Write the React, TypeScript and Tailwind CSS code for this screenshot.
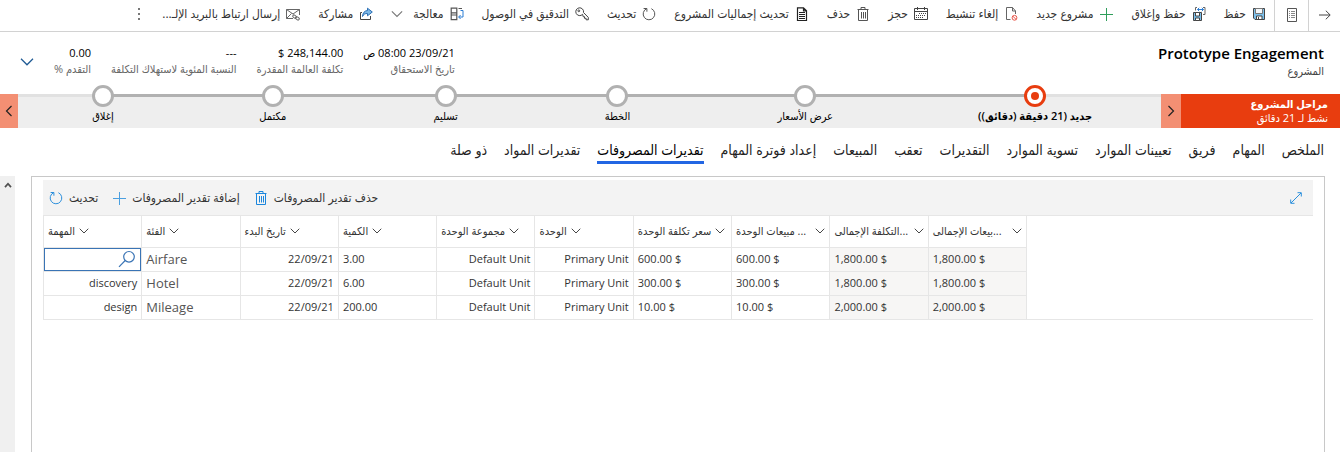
import type { ReactNode } from "react";

type IconProps = { children: ReactNode; className?: string };

function Icon({ children, className = "text-[#555]" }: IconProps) {
  return (
    <svg
      viewBox="0 0 14 14"
      fill="none"
      stroke="currentColor"
      strokeWidth="1"
      aria-hidden="true"
      className={"h-3.5 w-3.5 shrink-0 " + className}
    >
      {children}
    </svg>
  );
}

function Chevron({ className = "text-[#444]" }: { className?: string }) {
  return (
    <svg viewBox="0 0 11 7" fill="none" stroke="currentColor" aria-hidden="true" className={"shrink-0 " + className}>
      <path d="M.8 1 5.5 5.7 10.2 1" strokeWidth="1" />
    </svg>
  );
}

const SaveIcon = () => (
  <Icon className="text-[#444]">
    <path d="M1.500 1.500h11v11h-9.500l-1.500-1.500z" fill="#7cc0ec" />
    <path d="M3.500 1.500h7v5h-7z" fill="#f4f8fb" stroke="#777" />
    <path d="M4.500 9h5.500v3.500H4.500z" fill="#fff" />
    <path d="M6.500 10v2.500" />
  </Icon>
);

const SaveCloseIcon = () => (
  <Icon className="text-[#444]">
    <path d="M1.500 5.500h8v8h-8z" fill="#7cc0ec" />
    <path d="M3.500 5.500h4V9h-4z" fill="#fff" />
    <path d="M3.500 11h4v2.500h-4z" fill="#fff" />
    <path d="M5 .5H3.500v3M11 .5h2v7h-2" stroke="#666" />
    <path d="M5.500 2.500h6M7.200.800 5.500 2.500l1.700 1.700M9.800.800l1.700 1.700-1.700 1.700" stroke="#2b7cd3" />
  </Icon>
);

const PlusIcon = ({ className }: { className?: string }) => (
  <Icon className={className}>
    <path d="M7.500 1v13M1 7.500h13" />
  </Icon>
);

const DeactivateIcon = () => (
  <Icon className="text-[#666]">
    <path d="M6.500 12.500h-4V.500h6l3 3.500v3M8.500.500V4h3" />
    <circle cx="10.500" cy="10.800" r="2.400" stroke="#e8564a" />
    <path d="m8.800 9.200 3.400 3.300" stroke="#e8564a" />
  </Icon>
);

const CalendarIcon = () => (
  <Icon className="text-[#444]">
    <path d="M.5 1.500h13v11H.5zM.5 4.500h13M3.500 0v3M10.500 0v3" />
    <path d="M5 6.500h7M2 8.500h10M2 10.500h7" strokeDasharray="1 1" />
  </Icon>
);

const TrashIcon = ({ className }: { className?: string }) => (
  <Icon className={className}>
    <path d="M1.500 2.500h11M5 2.300V.500h4v1.800M2.500 2.500v11h9v-11M5.500 5v6.500M7.500 5v6.500M9.500 5v6.500" />
  </Icon>
);

const DocumentIcon = () => (
  <Icon className="text-[#222]">
    <path d="M2.500 .800h6l3 3v9.700h-9zM8.500.800v3h3" strokeWidth="1.200" />
    <path d="M4 5.500h6M4 7.500h6M4 9.500h6M4 11.500h6" />
  </Icon>
);

const RefreshIcon = ({ className }: { className?: string }) => (
  <Icon className={className}>
    <path d="M4.800 1.600A5.800 5.800 0 1 0 9.400 1.700" />
    <path d="M1.600 1.500h3.300v3.200" />
  </Icon>
);

const KeyIcon = () => (
  <Icon className="text-[#444]">
    <path d="M7.600 7.300A3.900 3.900 0 1 1 8.500 5.500l4.800 4.900v2.400h-2.200v-1.500H9.500V9.700H8.200z" />
    <circle cx="3.800" cy="3.800" r=".900" />
  </Icon>
);

const ProcessIcon = () => (
  <Icon className="text-[#555]">
    <path d="M1.200 1.200h5.600v4.600H1.200zM1.200 8h5.600v4.600H1.200zM1.200 5.800V8M6.800 5.800V8" strokeWidth="1.200" />
    <path d="M8.500 1.500h3.500" />
    <path d="M10.500 3.500h2.500v6.500H8.800M10.600 8 8.600 10l2 2" stroke="#2b7cd3" />
  </Icon>
);

const ShareIcon = () => (
  <Icon className="text-[#444]">
    <path d="M3 5.500H1.500v7h10V9" />
    <path d="M8.500 1.200 13.300 5 8.500 8.800V6.500C6 6.300 4.500 7.500 3.500 9.500c.2-3.500 2-5.800 5-6z" fill="#7db8e6" stroke="#2b6fb5" />
  </Icon>
);

const MailIcon = () => (
  <Icon className="text-[#666]">
    <path d="M7 11.500H.500v-9h13V8M.500 2.500l6.500 4.500 6.500-4.500M.500 11.500l5-5" />
    <rect x="6.600" y="8.400" width="4" height="2.400" rx="1.200" transform="rotate(35 8.600 9.600)" />
    <rect x="9.400" y="10.200" width="4" height="2.400" rx="1.200" transform="rotate(35 11.400 11.400)" />
  </Icon>
);

type Command = { label: string; icon: ReactNode; menu?: boolean };

const commands: Command[] = [
  { label: "حفظ", icon: <SaveIcon /> },
  { label: "حفظ وإغلاق", icon: <SaveCloseIcon /> },
  { label: "مشروع جديد", icon: <PlusIcon className="text-[#2f9e5b]" /> },
  { label: "إلغاء تنشيط", icon: <DeactivateIcon /> },
  { label: "حجز", icon: <CalendarIcon /> },
  { label: "حذف", icon: <TrashIcon /> },
  { label: "تحديث إجماليات المشروع", icon: <DocumentIcon /> },
  { label: "تحديث", icon: <RefreshIcon /> },
  { label: "التدقيق في الوصول", icon: <KeyIcon /> },
  { label: "معالجة", icon: <ProcessIcon />, menu: true },
  { label: "مشاركة", icon: <ShareIcon /> },
  { label: "إرسال ارتباط بالبريد الإلـ...", icon: <MailIcon /> },
];

function CommandBar() {
  return (
    <header className="flex h-8 shrink-0 items-center border-b border-[#d2d2d2] text-xs text-[#333]">
      <button aria-label="رجوع" className="flex h-full w-8 items-center justify-center border-l border-[#d2d2d2] pb-0.5">
        <svg viewBox="0 0 12 10" fill="none" stroke="#444" aria-hidden="true" className="h-2.5 w-3">
          <path d="M0 5h11M6.800.700 11.200 5 6.800 9.300" />
        </svg>
      </button>
      <button aria-label="القائمة" className="flex h-full w-[34px] items-center justify-center border-l border-[#d2d2d2] pb-0.5">
        <svg viewBox="0 0 12 14" fill="none" stroke="#555" aria-hidden="true" className="h-3.5 w-3">
          <path d="M1.500 .500h9v13h-9z" />
          <path d="M3 3.500h1M5 3.500h4M3 5.500h1M5 5.500h4M3 7.500h1M5 7.500h4M3 9.500h1M5 9.500h4" stroke="#888" />
        </svg>
      </button>
      <div className="flex h-full items-center gap-[18px] pr-2 pb-1">
        {commands.map((c) => (
          <button key={c.label} className="flex items-center gap-1.5 whitespace-nowrap">
            {c.icon}
            <span>{c.label}</span>
            {c.menu && <Chevron className="mr-1 h-2 w-3 text-[#777]" />}
          </button>
        ))}
        <button aria-label="المزيد" className="mr-1 flex flex-col gap-[3px]">
          <span className="h-0.5 w-0.5 bg-[#777]" />
          <span className="h-0.5 w-0.5 bg-[#777]" />
          <span className="h-0.5 w-0.5 bg-[#777]" />
        </button>
      </div>
    </header>
  );
}

const facts = [
  { value: "23/09/21 08:00 ص", label: "تاريخ الاستحقاق" },
  { value: "248,144.00 $", label: "تكلفة العالمة المقدرة" },
  { value: "---", label: "النسبة المئوية لاستهلاك التكلفة" },
  { value: "0.00", label: "التقدم %" },
];

function RecordHeader() {
  return (
    <section className="flex shrink-0 items-start justify-between pt-[11px] pr-4 pb-1 pl-5">
      <div>
        <h1 className="text-[15px] leading-5 font-semibold text-black">Prototype Engagement</h1>
        <p className="text-[11px] leading-4 text-[#444]">المشروع</p>
      </div>
      <div className="flex items-start gap-5 pt-0.5">
        <dl className="flex gap-5">
          {facts.map((f) => (
            <div key={f.label} className="flex flex-col whitespace-nowrap">
              <dt className="order-2 text-[11px] leading-4 text-[#666]">{f.label}</dt>
              <dd className="text-[11px] leading-4 font-medium text-black">{f.value}</dd>
            </div>
          ))}
        </dl>
        <button aria-label="توسيع" className="pt-3">
          <Chevron className="h-2.5 w-3.5 text-[#1f5a94]" />
        </button>
      </div>
    </section>
  );
}

const stages = [
  { label: "جديد (21 دقيقة (دقائق))", size: "flex-[252]", active: true },
  { label: "عرض الأسعار", size: "flex-[208]" },
  { label: "الخطة", size: "flex-[168]" },
  { label: "تسليم", size: "flex-[176]" },
  { label: "مكتمل", size: "flex-[170]" },
  { label: "إغلاق", size: "flex-[170]" },
];

function PagerArrow({ back }: { back?: boolean }) {
  return (
    <svg viewBox="0 0 7 12" fill="none" stroke="#222" strokeWidth="1.200" aria-hidden="true" className="h-3 w-2">
      <path d={back ? "M6 1 1 6l5 5" : "M1 1l5 5-5 5"} />
    </svg>
  );
}

function ProcessBar() {
  return (
    <section className="mt-[11px] flex h-[34px] shrink-0 bg-[#eee]">
      <button className="flex w-[159px] flex-col items-start justify-center bg-[#e83d0f] pr-3 text-[11px] leading-[14px] text-white">
        <span className="font-semibold">مراحل المشروع</span>
        <span>نشط لـ 21 دقائق</span>
      </button>
      <button aria-label="السابق" className="flex w-5 items-center justify-center bg-[#f38f73]">
        <PagerArrow />
      </button>
      <ol className="flex flex-1">
        {stages.map((s, i) => (
          <li key={s.label} className={"relative min-w-0 " + s.size}>
            <div className="flex h-[3px]">
              <span className={"flex-1 " + (i === 0 ? "bg-[#e1e1e1]" : "bg-[#b1b1b1]")} />
              <span className={"flex-1 " + (i === 5 ? "bg-[#e1e1e1]" : "bg-[#b1b1b1]")} />
            </div>
            <span
              className={
                "absolute -top-[9px] left-1/2 flex h-[22px] w-[22px] -translate-x-1/2 items-center justify-center rounded-full border-[3px] bg-white " +
                (s.active ? "border-[#e83d0f]" : "border-[#b1b1b1]")
              }
            >
              {s.active && <span className="h-2 w-2 rounded-full bg-[#e83d0f]" />}
            </span>
            <button
              className={
                "block w-full pt-[11px] text-center text-[11px] leading-4 whitespace-nowrap text-black " +
                (s.active ? "font-semibold" : "")
              }
            >
              {s.label}
            </button>
          </li>
        ))}
      </ol>
      <button aria-label="التالي" className="flex w-[18px] items-center justify-center bg-[#f38f73]">
        <PagerArrow back />
      </button>
    </section>
  );
}

const tabs = [
  "الملخص",
  "المهام",
  "فريق",
  "تعيينات الموارد",
  "تسوية الموارد",
  "التقديرات",
  "تعقب",
  "المبيعات",
  "إعداد فوترة المهام",
  "تقديرات المصروفات",
  "تقديرات المواد",
  "ذو صلة",
];

function Tabs() {
  return (
    <nav className="flex h-12 shrink-0 items-start gap-[17px] pt-2.5 pr-4 text-sm text-[#222]">
      {tabs.map((t) => (
        <a
          key={t}
          href="#"
          className={
            "h-[26px] border-b-[3px] leading-6 whitespace-nowrap " +
            (t === "تقديرات المصروفات" ? "border-[#2266e3] text-black" : "border-transparent")
          }
        >
          {t}
        </a>
      ))}
    </nav>
  );
}

const headers = [
  "المهمة",
  "الفئة",
  "تاريخ البدء",
  "الكمية",
  "مجموعة الوحدة",
  "الوحدة",
  "سعر تكلفة الوحدة",
  "... مبيعات الوحدة",
  "...التكلفة الإجمالى",
  "...بيعات الإجمالى",
];

const rows = [
  ["", "Airfare", "22/09/21", "3.00", "Default Unit", "Primary Unit", "600.00 $", "600.00 $", "1,800.00 $", "1,800.00 $"],
  ["discovery", "Hotel", "22/09/21", "6.00", "Default Unit", "Primary Unit", "300.00 $", "300.00 $", "1,800.00 $", "1,800.00 $"],
  ["design", "Mileage", "22/09/21", "200.00", "Default Unit", "Primary Unit", "10.00 $", "10.00 $", "2,000.00 $", "2,000.00 $"],
];

function cellStyle(col: number) {
  if (col === 1) return "text-left text-[13px] text-[#555]";
  if (col === 0 || col === 2 || col === 4 || col === 5) return "text-right text-[11px]";
  if (col >= 8) return "bg-[#f7f6f5] text-left text-[11px]";
  return "text-left text-[11px]";
}

function EstimatesGrid() {
  return (
    <div className="border-y border-[#e6e6e6]">
      <table className="w-[984px] table-fixed border-collapse text-[#333]">
        <thead>
          <tr className="h-[31px]">
            {headers.map((h, i) => (
              <th key={h} className="border-x border-[#e6e6e6] px-1 py-0 text-left text-[11px] font-normal">
                <button className={"flex w-full items-center gap-1 whitespace-nowrap " + (i > 6 ? "justify-between" : "")}>
                  <span dir="rtl">{h}</span>
                  <Chevron className="h-2 w-2.5" />
                </button>
              </th>
            ))}
          </tr>
        </thead>
        <tbody>
          {rows.map((r, ri) => (
            <tr key={r[3]} className="h-6">
              {r.map((v, ci) =>
                ri === 0 && ci === 0 ? (
                  <td key={ci} className="border border-[#e6e6e6] p-0">
                    <label className="flex h-[23px] items-center border border-[#3a74b5] pr-1">
                      <input aria-label="المهمة" className="w-full min-w-0 flex-1 bg-transparent px-1 text-[11px] outline-none" />
                      <svg viewBox="0 0 18 18" fill="none" stroke="#3a74b5" strokeWidth="1.200" aria-hidden="true" className="h-[18px] w-[18px] shrink-0">
                        <circle cx="11" cy="6.800" r="5.300" />
                        <path d="M7.200 10.500 1 16.800" />
                      </svg>
                    </label>
                  </td>
                ) : (
                  <td
                    key={ci}
                    className={
                      "border-x border-t border-[#e6e6e6] px-1 py-0 leading-5 whitespace-nowrap " + cellStyle(ci)
                    }
                  >
                    {v}
                  </td>
                ),
              )}
            </tr>
          ))}
        </tbody>
      </table>
    </div>
  );
}

function EstimatesPanel() {
  return (
    <section dir="ltr" className="ml-4 flex-1 border border-b-0 border-[#c8c8c8] px-[11px] pt-[3px]">
      <div className="flex h-[35px] items-center justify-between bg-[#f3f3f3] px-1.5 text-xs text-[#333]">
        <div className="flex gap-3.5">
          <button dir="rtl" className="flex items-center gap-1.5">
            <span>تحديث</span>
            <RefreshIcon className="order-1 text-[#2b8fdc]" />
          </button>
          <button dir="rtl" className="flex items-center gap-1.5">
            <span>إضافة تقدير المصروفات</span>
            <PlusIcon className="order-1 text-[#4a9fe0]" />
          </button>
          <button dir="rtl" className="flex items-center gap-1.5">
            <span>حذف تقدير المصروفات</span>
            <TrashIcon className="order-1 text-[#1b86dc]" />
          </button>
        </div>
        <button aria-label="ملء الشاشة" className="pr-1">
          <svg viewBox="0 0 14 14" fill="none" stroke="#2b8fdc" aria-hidden="true" className="h-3.5 w-3.5">
            <path d="M2 12 12 2M8.500 1.700h3.800v3.800M1.700 8.500v3.800h3.800" />
          </svg>
        </button>
      </div>
      <EstimatesGrid />
    </section>
  );
}

export default function App() {
  return (
    <div
      dir="rtl"
      className="flex h-screen flex-col overflow-hidden bg-white font-['Open_Sans','DejaVu_Sans_Condensed','DejaVu_Sans',sans-serif]"
    >
      <CommandBar />
      <RecordHeader />
      <ProcessBar />
      <Tabs />
      <main className="flex min-h-0 flex-1 pr-[15px]" dir="rtl">
        <EstimatesPanel />
        <div className="flex w-[15px] shrink-0 justify-center bg-[#f0f0f0] pt-1.5">
          <svg viewBox="0 0 9 7" fill="none" stroke="#505050" strokeWidth="2" aria-hidden="true" className="h-1.5 w-2">
            <path d="M1 6l3.500-4L8 6" />
          </svg>
        </div>
      </main>
    </div>
  );
}
